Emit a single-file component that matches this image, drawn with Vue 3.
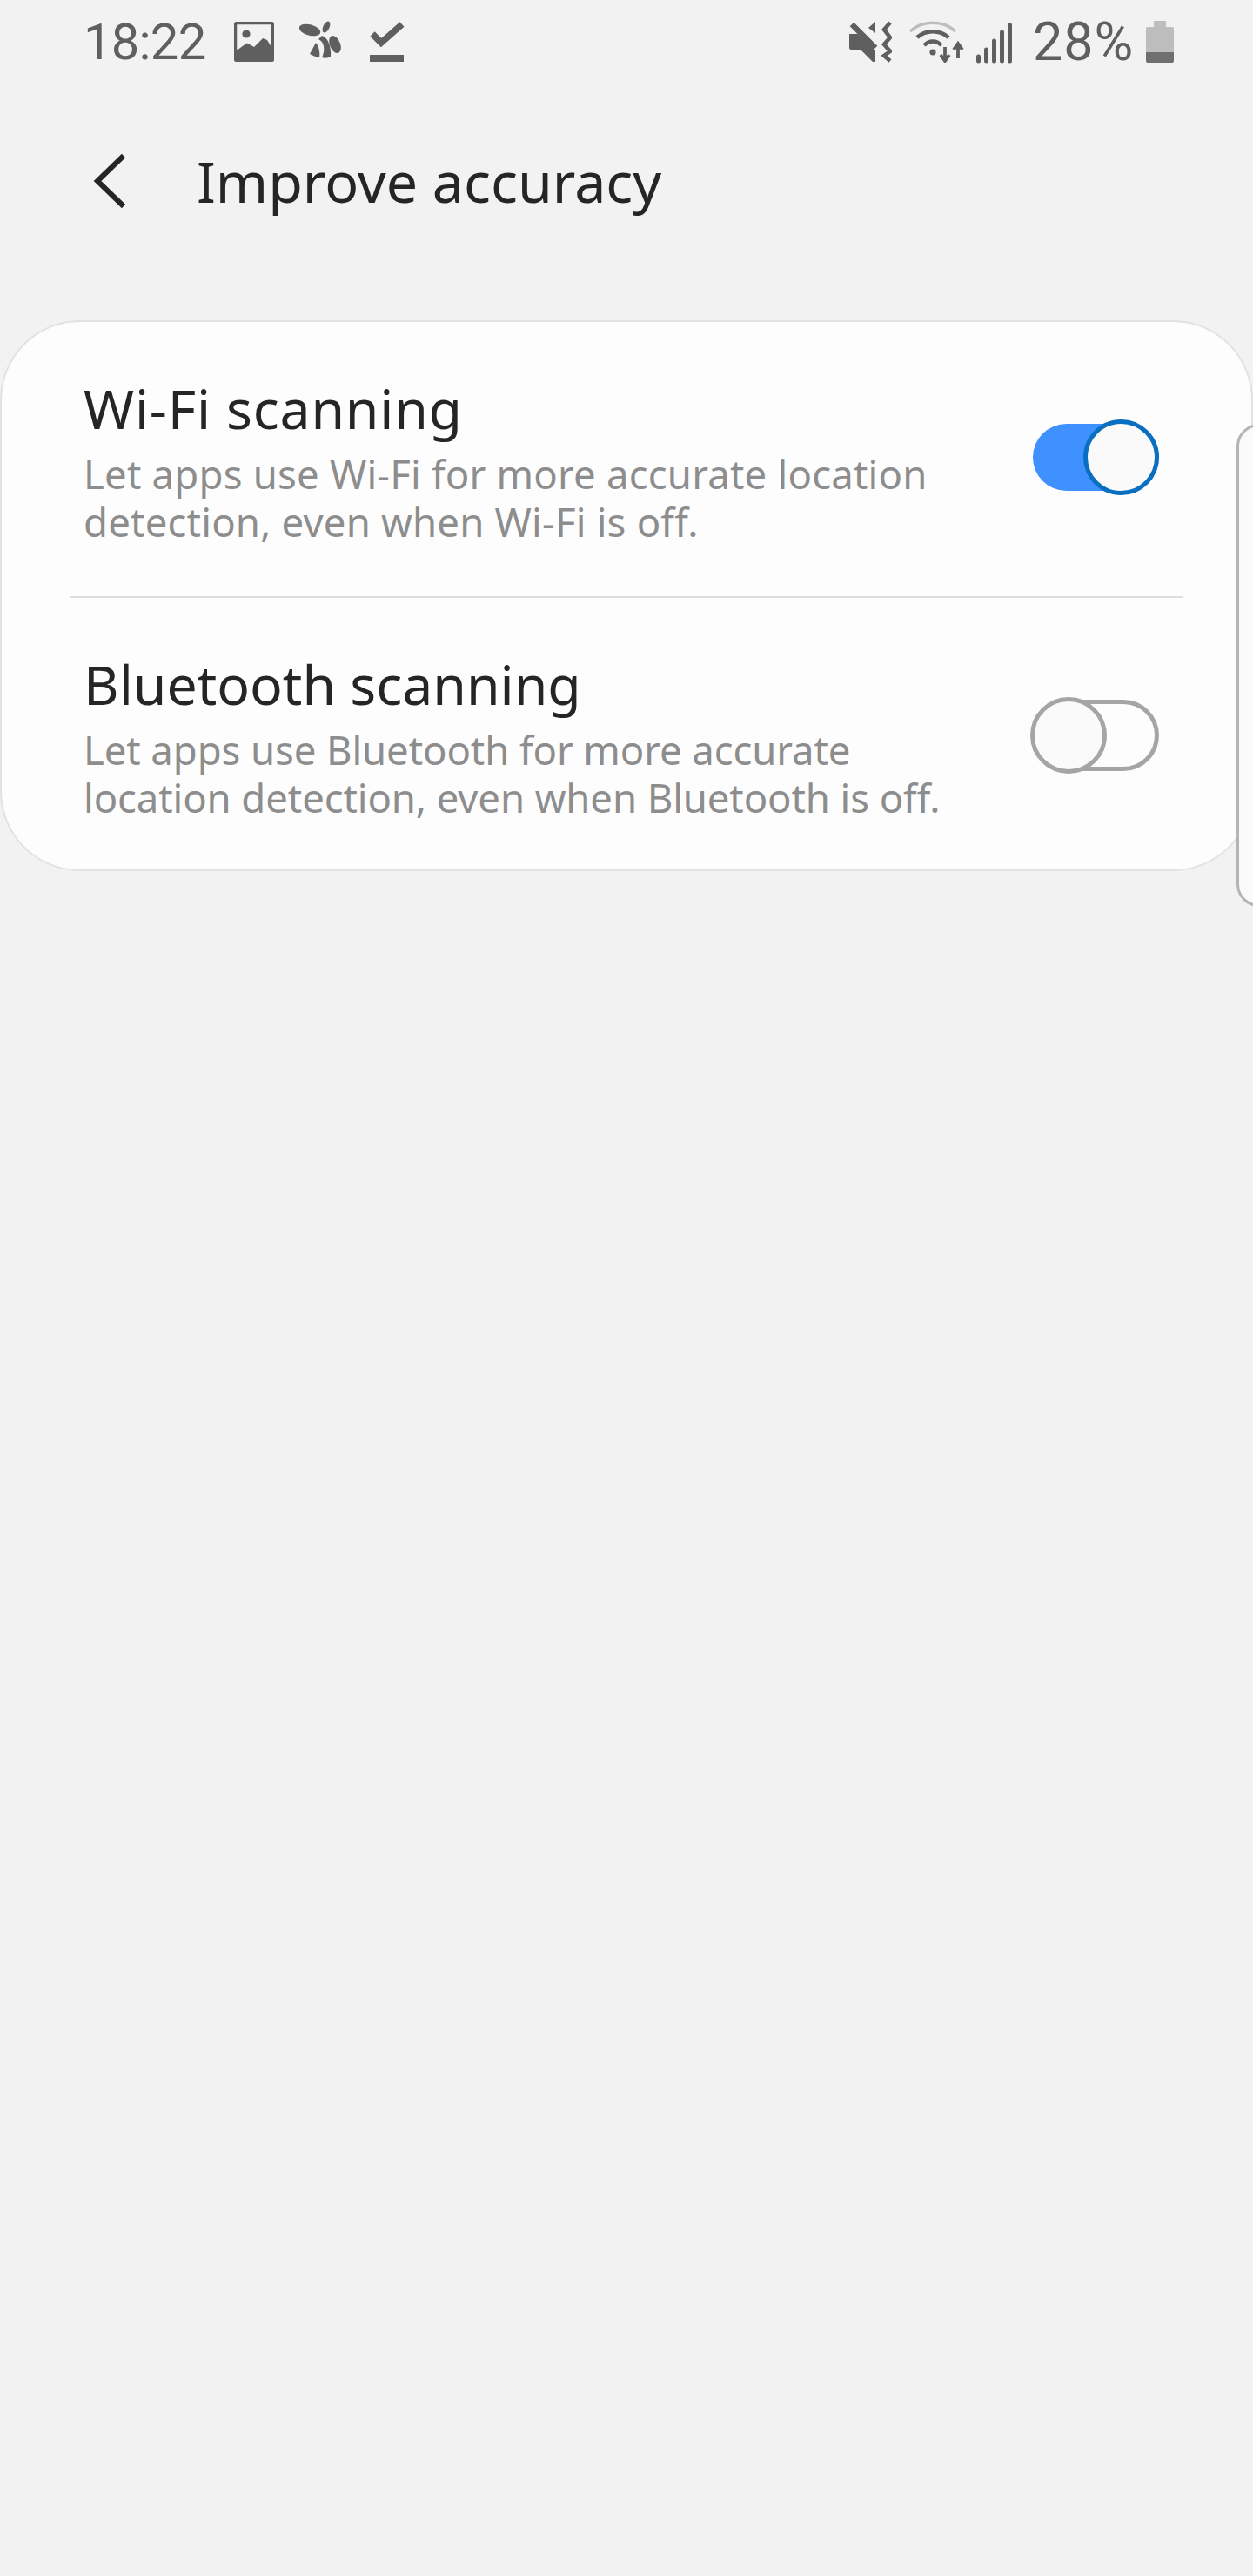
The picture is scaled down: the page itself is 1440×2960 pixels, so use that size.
<script setup>
const rows = [
  { title: 'Wi-Fi scanning', lines: ['Let apps use Wi-Fi for more accurate location', 'detection, even when Wi-Fi is off.'], on: true },
  { title: 'Bluetooth scanning', lines: ['Let apps use Bluetooth for more accurate', 'location detection, even when Bluetooth is off.'], on: false }
]
</script>

<template>
  <div class="page">
    <div class="status">
      <div class="left">
        <span class="time">18:22</span>
        <svg class="i-img" width="46" height="46" viewBox="0 0 46 46"><rect x="1.5" y="1.5" width="43" height="43" rx="2" fill="none" stroke="#5f5f5f" stroke-width="3.5"/><circle cx="14" cy="14" r="4.6" fill="#5f5f5f"/><path d="M3 33 L11 27 L15 24.5 L23 29 L33 19 L38 21 L43 29 V43 H3 Z" fill="#5f5f5f"/></svg>
        <svg class="i-bee" width="48" height="44" viewBox="0 0 48 44"><ellipse cx="12" cy="10.5" rx="12.5" ry="6.2" transform="rotate(15 12 10.5)" fill="#5f5f5f"/><ellipse cx="31" cy="7" rx="3.6" ry="7" transform="rotate(25 31 7)" fill="#5f5f5f"/><ellipse cx="41" cy="27" rx="6" ry="10.5" transform="rotate(-22 41 27)" fill="#5f5f5f"/><path d="M26 17 C33 19 37 30 36 41 C33 43 29 43 26 42 C30 34 29 24 22 21 Z" fill="#5f5f5f"/><path d="M19 25 C23 30 24 38 23 42 C19 41 15 40 12 38 Z" fill="#5f5f5f"/></svg>
        <svg class="i-check" width="40" height="47" viewBox="0 0 40 47"><path d="M3 15 L13 25 L37 4" fill="none" stroke="#5f5f5f" stroke-width="7.5"/><rect y="39" width="39" height="8" fill="#5f5f5f"/></svg>
      </div>
      <div class="right">
        <svg class="i-mute" width="49" height="48" viewBox="0 0 49 48"><path d="M0 15 H10 L30 34 V47 H27 L13 33 H2 Q0 33 0 31 Z" fill="#5f5f5f"/><path d="M3 4 L30 31" stroke="#5f5f5f" stroke-width="6.5" fill="none"/><path d="M30 1 V14 L22 8 Z" fill="#5f5f5f"/><path d="M47 2 L40 10 L47 19 L40 27 L47 35 L40 40 L47 46" stroke="#5f5f5f" stroke-width="4.5" fill="none"/></svg>
        <svg class="i-wifi" width="64" height="48" viewBox="0 0 64 48"><path d="M1 12 C15 -1 39 -1 53 12" stroke="#bdbdbd" stroke-width="3.6" fill="none"/><path d="M9 19 C19 10 35 10 45 19" stroke="#5f5f5f" stroke-width="4.4" fill="none"/><path d="M17 28 C23 22 31 22 37 28" stroke="#5f5f5f" stroke-width="4.4" fill="none"/><circle cx="27" cy="36" r="3.6" fill="#5f5f5f"/><path d="M41 30 V45 M36 39 L41 46 L46 39" stroke="#5f5f5f" stroke-width="3.8" fill="none"/><path d="M56 43 V28 M51 33 L56 26 L61 33" stroke="#5f5f5f" stroke-width="3.8" fill="none"/></svg>
        <svg class="i-signal" width="42" height="46" viewBox="0 0 42 46"><g stroke="#5f5f5f" stroke-width="5" stroke-linecap="round"><path d="M2.5 38 V43"/><path d="M11.5 30 V43"/><path d="M20.5 20 V43"/><path d="M29.5 10 V43"/><path d="M38.5 2 V43"/></g></svg>
        <span class="pct">28%</span>
        <svg class="i-batt" width="32" height="48" viewBox="0 0 32 48"><path d="M9 0 H23 V7 H30 Q32 7 32 9 V36 H0 V9 Q0 7 2 7 H9 Z" fill="#bdbdbd"/><path d="M0 36 H32 V46 Q32 48 30 48 H2 Q0 48 0 46 Z" fill="#6f6f6f"/></svg>
      </div>
    </div>

    <header class="bar">
      <svg class="back" width="38" height="64" viewBox="0 0 38 64"><path d="M35 3 L5 32 L35 61" fill="none" stroke="#252525" stroke-width="6"/></svg>
      <h1>Improve accuracy</h1>
    </header>

    <section class="card">
      <template v-for="(r, i) in rows" :key="r.title">
        <div v-if="i" class="divider"></div>
        <div class="row" :class="i ? 'second' : 'first'">
          <div class="text">
            <div class="title">{{ r.title }}</div>
            <div class="sub"><div v-for="l in r.lines" :key="l">{{ l }}</div></div>
          </div>
          <div class="toggle" :class="{ on: r.on }"><span class="thumb"></span></div>
        </div>
      </template>
      <div class="handle"></div>
    </section>
  </div>
</template>

<style scoped>
.page {
  width: 1440px;
  height: 2960px;
  background: #f2f2f2;
  font-family: "Noto Sans", "Open Sans", sans-serif;
  overflow: hidden;
}
.status {
  height: 96px;
  display: flex;
  justify-content: space-between;
  align-items: flex-start;
  padding: 24px 91px 0 96px;
  box-sizing: border-box;
  color: #5f5f5f;
}
.left, .right { display: flex; align-items: flex-start; }
.time, .pct {
  font-family: Roboto, sans-serif;
  font-size: 58px;
  line-height: 48px;
  height: 48px;
}
.time { width: 139px; letter-spacing: -0.8px; }
.pct { width: 117px; font-size: 61px; letter-spacing: 1px; margin-left: 23px; }
.i-img { margin-left: 34px; margin-top: 1px; }
.i-bee { margin-left: 29px; }
.i-check { margin-left: 33px; }
.i-wifi { margin-left: 20px; }
.i-signal { margin-left: 13px; margin-top: 3px; }
.i-batt { margin-left: 13px; }

.bar {
  height: 272px;
  display: flex;
  align-items: flex-start;
  padding: 80px 0 0 107px;
  box-sizing: border-box;
}
.back { flex: none; }
h1 {
  margin: -8px 0 0 81px;
  font-size: 64.5px;
  line-height: 80px;
  font-weight: 400;
  color: #252525;
}
.card {
  position: relative;
  height: 633px;
  box-sizing: border-box;
  background: #fdfdfd;
  border: 2px solid #e2e2e2;
  border-radius: 92px;
  padding: 0 78px;
}
.row {
  height: 315px;
  display: flex;
  align-items: center;
  justify-content: space-between;
  padding: 0 28px 0 16px;
}
.text { padding-bottom: 8px; }
.title {
  font-size: 62.5px;
  line-height: 96px;
  color: #252525;
}
.first .title { letter-spacing: 0.8px; }
.sub {
  font-size: 45.5px;
  line-height: 55px;
  color: #8d8d8d;
}
.first .sub { letter-spacing: 0.2px; }
.second .sub { letter-spacing: -0.1px; }
.divider {
  height: 2px;
  background: #dedede;
}
.toggle {
  position: relative;
  flex: none;
  width: 145px;
  height: 82px;
  box-sizing: border-box;
  border: 5px solid #a5a5a5;
  border-radius: 41px;
}
.toggle.on {
  height: 77px;
  margin-top: -4px;
  background: #3e91ff;
  border: none;
}
.thumb {
  position: absolute;
  top: -8px;
  left: -8px;
  width: 88px;
  height: 88px;
  box-sizing: border-box;
  border: 5px solid #a5a5a5;
  border-radius: 50%;
  background: #fafafa;
}
.toggle.on .thumb {
  top: -5px;
  left: 58px;
  width: 87px;
  height: 87px;
  border-color: #0a6fc0;
}
.handle {
  position: absolute;
  top: 117px;
  left: 1419px;
  width: 60px;
  height: 555px;
  box-sizing: border-box;
  border: 3px solid #b5b5b5;
  border-radius: 26px;
  background: #fafafa;
}
</style>
